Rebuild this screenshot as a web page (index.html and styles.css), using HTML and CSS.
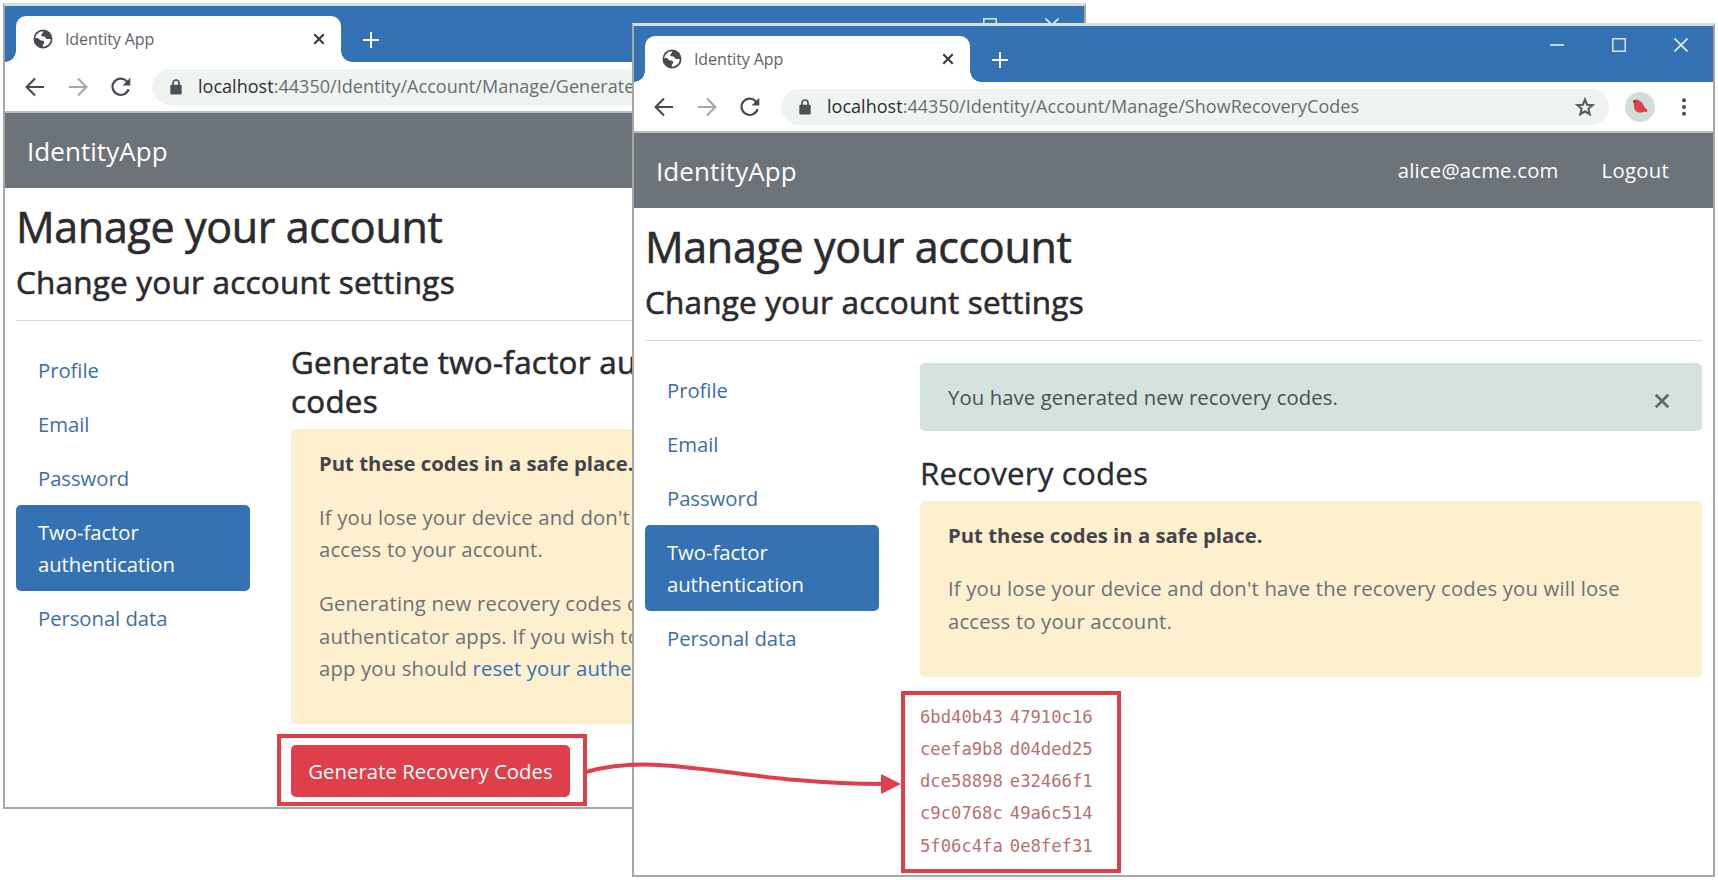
FILE: index.html
```
<!DOCTYPE html>
<html lang="en">
<head>
<meta charset="utf-8">
<title>Identity App</title>
<link rel="stylesheet" href="styles.css">
</head>
<body>
<svg class="defs" width="0" height="0">
  <symbol id="globe" viewBox="0 0 20 20"><circle cx="10" cy="10" r="9.500" fill="#474b51"/><path d="M2.300 9.500C2.600 5.500 6 2.400 10.300 2.300 10.500 4.200 8.300 4.600 8.200 6.300 8.200 7.800 9.800 7.200 11.500 7.600 12.800 8 12.300 9.600 14 10 15.500 10.300 16.500 9.600 17.700 10.300 17.500 14.500 14.200 17.600 10 17.700 9 16 10.800 15.200 11.200 13.800 11.600 12.200 10 11.600 8.500 11.600 6.500 11.600 6.500 9.900 5.200 9.300 4.200 8.900 3 9.200 2.300 9.500z" fill="#fff"/></symbol>
  <symbol id="cross" viewBox="0 0 12 12"><path d="M1.300 1.300l9.400 9.400M10.700 1.300l-9.400 9.400" fill="none" stroke="currentColor" stroke-width="2"/></symbol>
  <symbol id="plus" viewBox="0 0 16 16"><path d="M8 0v16M0 8h16" fill="none" stroke="#fff" stroke-width="2"/></symbol>
  <symbol id="arrow" viewBox="0 0 20 20"><path d="M19 10H2M10 1.500L1.600 10l8.400 8.500" fill="none" stroke="currentColor" stroke-width="2.100"/></symbol>
  <symbol id="reload" viewBox="0 0 20 20"><path d="M17.600 12.200A8.200 8.200 0 1 1 15.800 4.200L17 5.500" fill="none" stroke="#474b51" stroke-width="2.200"/><path d="M19.300.8v7.700h-7.700z" fill="#474b51"/></symbol>
  <symbol id="lock" viewBox="0 0 12 16"><path d="M3 7V4a3 3 0 0 1 6 0v3" fill="none" stroke="#4d5157" stroke-width="1.700"/><rect x=".3" y="5.700" width="11.400" height="9.800" rx="1.200" fill="#4d5157"/></symbol>
  <symbol id="win-min" viewBox="0 0 14 14"><path d="M0 7h14" stroke="currentColor" stroke-width="1.600"/></symbol>
  <symbol id="win-max" viewBox="0 0 14 14"><rect x=".8" y=".8" width="12.400" height="12.400" fill="none" stroke="currentColor" stroke-width="1.400"/></symbol>
  <symbol id="win-close" viewBox="0 0 14 14"><path d="M.5.5l13 13M13.500.5l-13 13" stroke="currentColor" stroke-width="1.600"/></symbol>
</svg>

<section class="window window-back">
  <header class="titlebar">
    <div class="tab">
      <svg class="favicon"><use href="#globe"/></svg>
      <span class="tab-title">Identity App</span>
      <svg class="tab-close"><use href="#cross"/></svg>
    </div>
    <svg class="new-tab"><use href="#plus"/></svg>
    <div class="controls">
      <svg><use href="#win-min"/></svg><svg><use href="#win-max"/></svg><svg><use href="#win-close"/></svg>
    </div>
  </header>
  <div class="toolbar">
    <svg class="tool"><use href="#arrow"/></svg>
    <svg class="tool forward"><use href="#arrow"/></svg>
    <svg class="tool"><use href="#reload"/></svg>
    <div class="omnibox">
      <svg class="lock"><use href="#lock"/></svg>
      <span class="url"><b>localhost</b>:44350/Identity/Account/Manage/Generate</span>
    </div>
  </div>
  <nav class="navbar"><span class="brand">IdentityApp</span></nav>
  <main class="page">
    <h1>Manage your account</h1>
    <h2>Change your account settings</h2>
    <hr>
    <div class="columns">
      <ul class="pills">
        <li>Profile</li><li>Email</li><li>Password</li>
        <li class="active">Two-factor<br>authentication</li>
        <li>Personal data</li>
      </ul>
      <div class="content">
        <h3 class="semi">Generate two-factor au<br>codes</h3>
        <div class="alert warning tall">
          <p><strong>Put these codes in a safe place.</strong></p>
          <p>If you lose your device and don't<br>access to your account.</p>
          <p>Generating new recovery codes d<br>authenticator apps. If you wish to<br>app you should <a>reset your authen</a></p>
        </div>
        <div class="highlight action"><button class="danger">Generate Recovery Codes</button></div>
      </div>
    </div>
  </main>
</section>

<section class="window window-front">
  <header class="titlebar">
    <div class="tab">
      <svg class="favicon"><use href="#globe"/></svg>
      <span class="tab-title">Identity App</span>
      <svg class="tab-close"><use href="#cross"/></svg>
    </div>
    <svg class="new-tab"><use href="#plus"/></svg>
    <div class="controls">
      <svg><use href="#win-min"/></svg><svg><use href="#win-max"/></svg><svg><use href="#win-close"/></svg>
    </div>
  </header>
  <div class="toolbar">
    <svg class="tool"><use href="#arrow"/></svg>
    <svg class="tool forward"><use href="#arrow"/></svg>
    <svg class="tool"><use href="#reload"/></svg>
    <div class="omnibox">
      <svg class="lock"><use href="#lock"/></svg>
      <span class="url"><b>localhost</b>:44350/Identity/Account/Manage/ShowRecoveryCodes</span>
      <svg class="star" viewBox="0 0 20 20"><path d="M10 2.500l2.100 5.200 5.500.4-4.200 3.600 1.300 5.500-4.700-2.900-4.700 2.900 1.300-5.500-4.200-3.600 5.500-.4z" fill="none" stroke="#5a5e64" stroke-width="2.100"/></svg>
    </div>
    <svg class="avatar" viewBox="0 0 30 30"><circle cx="15" cy="15" r="15" fill="#cfdfd9"/><path d="M7.800 9C8.500 7.500 10.500 7 13 7.800l4 2.700 2.500 4.500 3.200 3.500-1 1.800-2.200-.8c-2.500 1.700-7.500 1.500-9.500-1.500-1.500-2.300-.2-4.500-2.200-9z" fill="#df3f4b"/><circle cx="9.600" cy="9.700" r=".9" fill="#333"/></svg>
    <svg class="menu" viewBox="0 0 4 20"><circle cx="2" cy="3.200" r="2"/><circle cx="2" cy="10" r="2"/><circle cx="2" cy="16.800" r="2"/></svg>
  </div>
  <nav class="navbar"><span class="brand">IdentityApp</span><span class="user">alice@acme.com</span><span class="logout">Logout</span></nav>
  <main class="page">
    <h1>Manage your account</h1>
    <h2>Change your account settings</h2>
    <hr>
    <div class="columns">
      <ul class="pills">
        <li>Profile</li><li>Email</li><li>Password</li>
        <li class="active">Two-factor<br>authentication</li>
        <li>Personal data</li>
      </ul>
      <div class="content">
        <div class="alert success"><span>You have generated new recovery codes.</span><svg class="dismiss"><use href="#cross"/></svg></div>
        <h3>Recovery codes</h3>
        <div class="alert warning short">
          <p><strong>Put these codes in a safe place.</strong></p>
          <p>If you lose your device and don't have the recovery codes you will lose<br>access to your account.</p>
        </div>
        <div class="highlight codes">
          <div><code>6bd40b43</code><code>47910c16</code></div>
          <div><code>ceefa9b8</code><code>d04ded25</code></div>
          <div><code>dce58898</code><code>e32466f1</code></div>
          <div><code>c9c0768c</code><code>49a6c514</code></div>
          <div><code>5f06c4fa</code><code>0e8fef31</code></div>
        </div>
      </div>
    </div>
  </main>
</section>

<svg class="connector" width="320" height="50" viewBox="586 750 320 50">
  <path d="M586 772C665 750 735 784 884 784" fill="none" stroke="#df3f4b" stroke-width="4"/>
  <path d="M881 774l20 10-20 10z" fill="#df3f4b"/>
</svg>
</body>
</html>
```
FILE: styles.css
```
* { box-sizing: border-box; }

body {
  margin: 0;
  position: relative;
  width: 1718px;
  height: 880px;
  overflow: hidden;
  background: #fff;
  color: #2b2b2f;
  font: 20.3px/32.3px "Open Sans", "Noto Sans", sans-serif;
}

svg { display: block; flex: none; }
.defs { position: absolute; }

/* Browser windows */
.window {
  position: absolute;
  display: flex;
  flex-direction: column;
  background: #fff;
  border: 2px solid #a3a8a8;
  border-top: 3px solid #cfe2dc;
  overflow: hidden;
}
.window-back { left: 3px; top: 3px; width: 1083px; height: 806px; }
.window-front { left: 632px; top: 23px; width: 1083px; height: 854px; }

.titlebar {
  flex: none;
  display: flex;
  align-items: flex-start;
  height: 56px;
  padding: 10px 25px 0 11px;
  background: #3572b4;
}
.tab {
  position: relative;
  display: flex;
  align-items: center;
  width: 325px;
  height: 46px;
  padding: 0 16px 0 17px;
  background: #fff;
  border-radius: 10px 10px 0 0;
}
.tab::before, .tab::after {
  content: "";
  position: absolute;
  bottom: 0;
  width: 11px;
  height: 11px;
}
.tab::before { left: -11px; background: radial-gradient(circle at 0 0, #3572b4 10.5px, #fff 11px); }
.tab::after { right: -11px; background: radial-gradient(circle at 100% 0, #3572b4 10.5px, #fff 11px); }
.favicon { width: 20px; height: 20px; }
.tab-title { flex: 1; margin-left: 12px; font-size: 16px; letter-spacing: -.1px; color: #5f6368; }
.tab-close { width: 12px; height: 12px; color: #33363a; }
.new-tab { width: 16px; height: 16px; margin: 16px 0 0 22px; }
.controls { display: flex; gap: 48px; margin: 2px 0 0 auto; color: #e6f0f2; }
.controls svg { width: 14px; height: 14px; }

.toolbar {
  flex: none;
  display: flex;
  align-items: center;
  height: 51px;
  padding: 0 27px 0 20px;
  border-bottom: 2px solid #b9bdbe;
}
.tool { width: 20px; height: 20px; margin-right: 23px; color: #474b51; }
.forward { color: #a3a8aa; transform: scaleX(-1); }
.omnibox {
  flex: 1;
  display: flex;
  align-items: center;
  height: 36px;
  margin-left: -2px;
  padding: 0 14px 0 18px;
  border-radius: 18px;
  background: #f0f4f1;
  overflow: hidden;
}
.lock { width: 12px; height: 16px; }
.url { flex: 1; margin-left: 16px; font-size: 18px; letter-spacing: .03px; color: #696d72; white-space: nowrap; }
.url b { font-weight: 400; color: #2b2e32; }
.star { width: 20px; height: 20px; }
.avatar { width: 30px; height: 30px; margin: 0 27px 0 16px; }
.menu { width: 4px; height: 20px; fill: #474b51; }

.navbar {
  flex: none;
  display: flex;
  align-items: center;
  height: 75px;
  padding: 0 44px 0 22px;
  background: #6c7379;
  color: #fff;
}
.brand { flex: 1; padding-top: 1px; font-size: 26px; letter-spacing: .05px; }
.user { letter-spacing: .2px; }
.logout { margin-left: 43px; letter-spacing: .3px; }

/* Page */
.page { padding: 13px 11px 0 11px; }
h1, h2, h3 { margin: 0; font-weight: 400; white-space: nowrap; }
h1, h2, .semi { -webkit-text-stroke: .6px currentColor; }
h3 { font-size: 31.300px; line-height: 38.500px; letter-spacing: .15px; -webkit-text-stroke: .3px currentColor; }
h1 { font-size: 43px; line-height: 52px; letter-spacing: -.35px; }
h2 { margin-top: 9px; font-size: 31.500px; line-height: 39px; letter-spacing: .2px; }
.semi { letter-spacing: .3px; }
hr { margin: 19px 0 22px; border: 0; height: 1px; background: #cddfd9; }

.columns { display: flex; gap: 41px; }
.pills { flex: none; width: 234px; margin: 0; padding: 0; list-style: none; color: #3d6ea6; letter-spacing: -.05px; }
.pills li { padding: 10.850px 22px; border-radius: 5px; }
.pills .active { background: #3572b4; color: #fff; }

.content { flex: 1; min-width: 0; }
.alert { border-radius: 5px; padding: 18px 28px; white-space: nowrap; }
.alert p { margin: 0 0 21.700px; color: #6e7076; letter-spacing: .17px; }
.alert strong { color: #46444a; letter-spacing: .02px; }
.alert a { color: #3572b4; }
.success { display: flex; justify-content: space-between; height: 68px; margin-bottom: 23px; background: #d2e4dd; color: #4b4f56; letter-spacing: .1px; }
.dismiss { width: 16px; height: 16px; margin: 12px 4px 0 0; color: #5f6a6a; }
.warning { background: #fcf0cf; }
.short { height: 176px; margin-top: 8px; }
.tall { height: 295px; margin-top: 9px; }

.highlight { border: 4px solid #df3f4b; }
.action { width: 310px; height: 72px; margin: 10px 0 0 -14px; padding: 7px 10px; }
.danger {
  width: 279px;
  height: 52px;
  padding: 0;
  border: 0;
  border-radius: 5px;
  background: #df3f4b;
  color: #fff;
  font: inherit;
  letter-spacing: .07px;
}
.codes { width: 220px; height: 182px; margin: 14px 0 0 -19px; padding: 6px 15px; }
.codes div { display: flex; gap: 7px; }
code { font: 17.200px/32.300px "DejaVu Sans Mono", monospace; color: #b4716f; }

.connector { position: absolute; left: 586px; top: 750px; }
```
